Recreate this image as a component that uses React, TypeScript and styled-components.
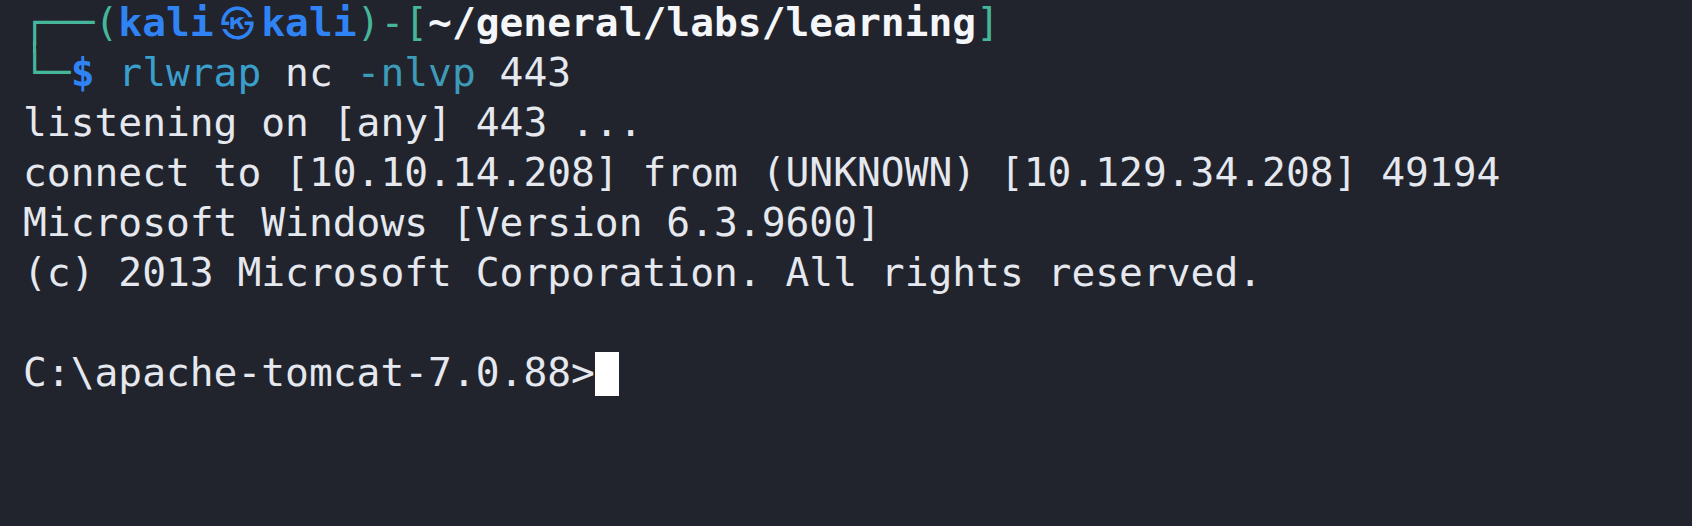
import React from "react";
import styled, { createGlobalStyle } from "styled-components";

const Global = createGlobalStyle`
  html, body {
    margin: 0;
    padding: 0;
    background: #21242d;
  }
  body {
    width: 1692px;
    height: 526px;
    overflow: hidden;
  }
`;

const Terminal = styled.div`
  box-sizing: border-box;
  width: 1692px;
  height: 526px;
  background: #21242d;
  padding: 0 0 0 23px;
  font-family: "DejaVu Sans Mono", "Noto Sans CJK KR", monospace;
  font-size: 39.6px;
  color: #e5e8ee;
  display: flex;
  flex-direction: column;
`;

const Output = styled.div`
  margin-top: -3px;
  display: flex;
  flex-direction: column;
`;

const Line = styled.div`
  height: 50px;
  line-height: 50px;
  white-space: pre;
`;

const Frame = styled.span`
  color: #45b69a;
`;

/* joins the two box-drawing corners across the line gap, as a terminal draws them */
const Corner = styled.span`
  position: relative;
  color: #45b69a;
  &::before {
    content: "";
    position: absolute;
    left: calc(0.5ch - 1.5px);
    top: -8px;
    width: 3px;
    height: 12px;
    background: #45b69a;
  }
`;

const Host = styled.span`
  color: #3083f5;
  font-weight: bold;
`;

/* a wide (two-cell) character slot, sized in the terminal font's cells */
const WideCell = styled.span`
  display: inline-block;
  width: 2ch;
  height: 50px;
  text-align: center;
  vertical-align: top;
  line-height: 50px;
`;

const Symbol = styled.span`
  color: #3083f5;
  font-family: "Noto Sans CJK KR", "DejaVu Sans", sans-serif;
  font-size: 34px;
`;

const PathText = styled.span`
  color: #f4f6f9;
  font-weight: bold;
`;

const Word = styled.span<{ $tone: string }>`
  color: ${(p) => p.$tone};
`;

const Cursor = styled.span`
  display: inline-block;
  width: 1ch;
  height: 44px;
  background: #ffffff;
  vertical-align: -10px;
`;

export default function App() {
  return (
    <>
      <Global />
      <Terminal>
        <Output>
          <Line>
            <Frame>┌──(</Frame>
            <Host>kali</Host>
            <WideCell>
              <Symbol>㉿</Symbol>
            </WideCell>
            <Host>kali</Host>
            <Frame>)-[</Frame>
            <PathText>~/general/labs/learning</PathText>
            <Frame>]</Frame>
          </Line>
          <Line>
            <Corner>└</Corner>
            <Frame>─</Frame>
            <Host>$</Host>{" "}
            <Word $tone="#3a9fcc">rlwrap</Word> <Word $tone="#e5e8ee">nc</Word>{" "}
            <Word $tone="#3e9bb8">-nlvp</Word> <Word $tone="#e5e8ee">443</Word>
          </Line>
          <Line>listening on [any] 443 ...</Line>
          <Line>connect to [10.10.14.208] from (UNKNOWN) [10.129.34.208] 49194</Line>
          <Line>Microsoft Windows [Version 6.3.9600]</Line>
          <Line>(c) 2013 Microsoft Corporation. All rights reserved.</Line>
          <Line> </Line>
          <Line>
            C:\apache-tomcat-7.0.88&gt;<Cursor />
          </Line>
        </Output>
      </Terminal>
    </>
  );
}
